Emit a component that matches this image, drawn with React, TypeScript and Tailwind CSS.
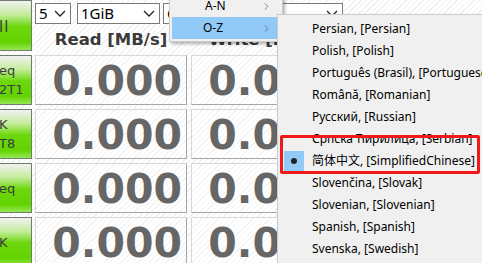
import { ChevronRight } from 'lucide-react'

const sideBtn =
    'h-full w-[32px] shrink-0 border-y border-r border-[#707c6c] bg-[linear-gradient(to_bottom,#f2f2f2_0%,#c4ec9c_28%,#6cd80c_52%,#62d400_84%,#96e854_100%)] flex flex-col justify-center text-[#3c3c3c] font-["DejaVu_Sans",sans-serif] leading-none'

const cell =
    'h-full w-[152px] shrink-0 border border-[#d8d8d8] border-r-[#a6a6a6] border-b-[#a6a6a6] bg-[repeating-linear-gradient(135deg,#ffffff_0px,#ffffff_3px,#f3f3f3_3px,#f3f3f3_4px)] text-right pr-[4px] pt-[2px] leading-[46px] overflow-hidden font-["DejaVu_Sans",sans-serif] font-bold text-[41px] text-[#666666]'

const rows = [
    { lines: ['eq', '2T1'] },
    { lines: ['K', 'T8'] },
    { lines: ['eq'] },
    { lines: ['K'] },
]

const languages = [
    'Persian, [Persian]',
    'Polish, [Polish]',
    'Português (Brasil), [Portuguese (Brazil)]',
    'Română, [Romanian]',
    'Русский, [Russian]',
    'Српска Ћирилица, [Serbian]',
    '简体中文, [SimplifiedChinese]',
    'Slovenčina, [Slovak]',
    'Slovenian, [Slovenian]',
    'Spanish, [Spanish]',
    'Svenska, [Swedish]',
    'Türkçe, [Turkish]',
]

function Chevron () {
    return <svg width="12" height="7" viewBox="0 0 12 7" className="shrink-0">
        <polyline points="1,1 6,6 11,1" fill="none" stroke="#222" strokeWidth="1.3" />
    </svg>
}

function Combo ({ text, className }: { text: string, className: string }) {
    return <div className={`h-[21px] shrink-0 border border-[#7a7a7a] bg-white flex items-center justify-between pl-[3px] pr-[4px] text-[15px] text-black font-["Noto_Sans",sans-serif] ${className}`}>
        <span className="leading-none whitespace-nowrap">{text}</span>
        <Chevron />
    </div>
}

export default function App () {
    return <div className='relative w-[482px] h-[263px] overflow-hidden bg-[repeating-linear-gradient(135deg,#ffffff_0px,#ffffff_3px,#efefef_3px,#efefef_4px)]'>
        <div className="flex flex-col gap-[4px]">
            <div className="flex gap-[3px] h-[51px]">
                <div className={sideBtn}>
                    <span className="text-[15px] mt-[4px] -ml-[1px] tracking-[1px]">ll</span>
                </div>
                <div className="flex flex-col">
                    <div className="flex mt-[3px] h-[21px]">
                        <Combo text="5" className="w-[36px]" />
                        <Combo text="1GiB" className="w-[83px] ml-[6px]" />
                        <Combo text="C: 0% (0/119GiB)" className="w-[180px] ml-[3px]" />
                    </div>
                    <div className="flex mt-[6px] leading-[20px] font-['DejaVu_Sans',sans-serif] font-bold text-[16.5px] text-[#3a3a3a]">
                        <div className="w-[152px] text-center whitespace-nowrap">Read [MB/s]</div>
                        <div className="w-[152px] ml-[4px] text-center whitespace-nowrap">Write [MB/s]</div>
                    </div>
                </div>
            </div>
            {rows.map((r, i) => <div key={i} className="flex gap-[3px] h-[50px]">
                <div className={sideBtn}>
                    {r.lines.map((l, j) => <span key={j} className={`text-[13px] -ml-[1px] ${j > 0 ? 'mt-[6px]' : ''}`}>{l}</span>)}
                </div>
                <div className={cell}>0.000</div>
                <div className={`${cell} ml-[1px]`}>0.000</div>
            </div>)}
        </div>

        {/* language menu */}
        <div className="absolute left-[169px] top-[-8px] w-[114px] pt-[2px] pb-[2px] bg-[#f0f0f0] border border-[#cccccc] shadow-[2px_2px_3px_rgba(0,0,0,0.3)] font-['Noto_Sans','Noto_Sans_CJK_SC',sans-serif] text-[12px] text-black">
            <div className="h-[22px] flex items-center pl-[33px] pr-[8px] justify-between mx-[2px]">
                <span>A-N</span>
                <ChevronRight size={11} strokeWidth={1.5} className="text-[#555]" />
            </div>
            <div className="h-[22px] flex items-center pl-[31px] pr-[8px] justify-between mx-[2px] bg-[#91c9f7]">
                <span>O-Z</span>
                <ChevronRight size={11} strokeWidth={1.5} className="text-[#555]" />
            </div>
        </div>

        <div className="absolute left-[277px] top-[14px] w-[290px] pt-[3px] bg-[#f0f0f0] border border-[#cccccc] shadow-[2px_2px_3px_rgba(0,0,0,0.3)] font-['Noto_Sans','Noto_Sans_CJK_SC',sans-serif] text-[12px] text-black">
            {languages.map((l) => <div key={l} className="h-[22px] flex items-center mx-[2px] whitespace-nowrap">
                <div className={`w-[20px] h-[20px] shrink-0 ml-[4px] mr-[8px] flex items-center justify-center ${l.startsWith('简') ? 'bg-[#91c9f7]' : ''}`}>
                    {l.startsWith('简') && <div className="w-[6px] h-[6px] rounded-full bg-[#222]" />}
                </div>
                <span>{l}</span>
            </div>)}
        </div>

        {/* annotation */}
        <div className="absolute left-[280px] top-[135px] w-[200px] h-[39px] border-[3px] border-[#f01818] rounded-[2px]" />
    </div>
}
